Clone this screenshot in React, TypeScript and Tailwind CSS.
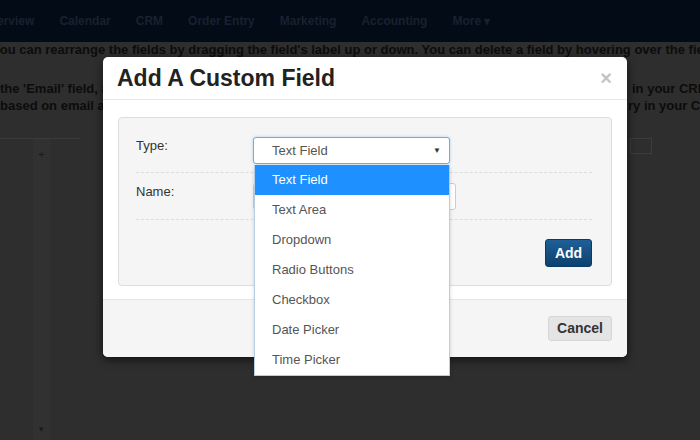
import React from 'react';

const navItems = ['Overview', 'Calendar', 'CRM', 'Order Entry', 'Marketing', 'Accounting'];
const fieldTypes = ['Text Field', 'Text Area', 'Dropdown', 'Radio Buttons', 'Checkbox', 'Date Picker', 'Time Picker'];

function BackgroundPage() {
  return (
    <div className="flex h-full flex-col">
      {/* top navigation, dimmed by the overlay */}
      <div className="flex h-[42px] shrink-0 items-center gap-[25px] bg-[#030b17] pl-0 text-[12px] font-bold text-[#18212f]">
        <span className="-ml-[19px]">{navItems[0]}</span>
        {navItems.slice(1).map((item) => (
          <span key={item}>{item}</span>
        ))}
        <span>More ▾</span>
      </div>

      <div className="overflow-hidden whitespace-nowrap text-[13px] font-bold text-[#0c0c0c]">
        <p className="-ml-[8px] leading-[15px]">
          You can rearrange the fields by dragging the field's label up or down. You can delete a field by hovering over the field
        </p>
        <div className="mt-[23px] flex leading-[17px]">
          <span className="w-[632px] shrink-0 overflow-hidden">the 'Email' field, a</span>
          <span>in your CRM</span>
        </div>
        <div className="flex leading-[17px]">
          <span className="w-[628px] shrink-0 overflow-hidden">based on email a</span>
          <span>ry in your CRM</span>
        </div>
      </div>

      <div className="mt-[24px] flex flex-1">
        <div className="flex w-[80px] flex-col border-t border-[#3a3a3a]">
          <div className="ml-[33px] flex w-[17px] flex-1 flex-col items-center bg-[#313131] pt-[10px] text-[11px] leading-none text-[#1a1a1a]">
            <span>+</span>
            <span className="mt-auto pb-[6px] text-[9px]">▾</span>
          </div>
        </div>
        <div className="flex flex-1 justify-end pr-[48px]">
          <div className="h-[16px] w-[22px] border border-[#3c3c3c]" />
        </div>
      </div>
    </div>
  );
}

function AddFieldModal() {
  return (
    <div className="absolute left-[103px] top-[57px] flex h-[300px] w-[524px] flex-col rounded-[5px] bg-white shadow-[0_3px_10px_rgba(0,0,0,0.6)]">
      <div className="flex h-[43px] items-center justify-between border-b border-[#e8e8e8] pl-[14px] pr-[15px]">
        <h2 className="text-[23px] font-bold text-[#222]">Add A Custom Field</h2>
        <span className="text-[20px] font-bold leading-none text-[#c4c4c4]">×</span>
      </div>

      <div className="px-[15px] pb-[13px] pt-[17px]">
        <div className="rounded-[4px] border border-[#dddddd] bg-[#f5f5f5] pl-[17px] pr-[19px] text-[13px] text-[#333]">
          <div className="flex items-start border-b border-dashed border-[#dcdcdc] pb-[8px] pt-[19px]">
            <span className="w-[117px] leading-[18px]">Type:</span>
            <div className="relative">
              <div className="flex h-[27px] w-[197px] items-center justify-between rounded-[3px] border border-[#66afe9] bg-white pl-[18px] pr-[8px] text-[#555] shadow-[0_0_3px_rgba(102,175,233,0.5)]">
                <span>Text Field</span>
                <span className="text-[8px] text-[#333]">▼</span>
              </div>
              <ul className="absolute left-[1px] top-[28px] z-10 w-[196px] border border-t-0 border-[#b9cde2] bg-white shadow-[0_2px_4px_rgba(0,0,0,0.15)]">
                {fieldTypes.map((t, i) => (
                  <li
                    key={t}
                    className={
                      i === 0
                        ? 'flex h-[30px] items-center bg-[#1e90ff] pl-[17px] text-white'
                        : 'flex h-[30px] items-center pl-[17px] text-[#555]'
                    }
                  >
                    {t}
                  </li>
                ))}
              </ul>
            </div>
          </div>

          <div className="flex items-start border-b border-dashed border-[#dcdcdc] pb-[9px] pt-[10px]">
            <span className="w-[117px] leading-[18px]">Name:</span>
            <div className="h-[27px] w-[203px] rounded-[3px] border border-[#cccccc] bg-white" />
          </div>

          <div className="flex justify-end pb-[18px] pt-[19px]">
            <button className="h-[28px] w-[47px] rounded-[3px] border border-[#0b3a66] bg-gradient-to-b from-[#1f5f96] to-[#0d416f] text-[14px] font-bold text-white">
              Add
            </button>
          </div>
        </div>
      </div>

      <div className="flex flex-1 items-center justify-end rounded-b-[5px] border-t border-[#e5e5e5] bg-[#f5f5f5] px-[15px]">
        <button className="h-[25px] w-[64px] rounded-[3px] border border-[#d6d6d6] bg-[#e4e4e4] text-[14px] font-bold text-[#333]">
          Cancel
        </button>
      </div>
    </div>
  );
}

export default function App() {
  return (
    <div
      className="relative h-[440px] w-[700px] overflow-hidden bg-[#2e2e2e]"
      style={{ fontFamily: '"Liberation Sans", Arial, sans-serif' }}
    >
      <BackgroundPage />
      <AddFieldModal />
    </div>
  );
}
